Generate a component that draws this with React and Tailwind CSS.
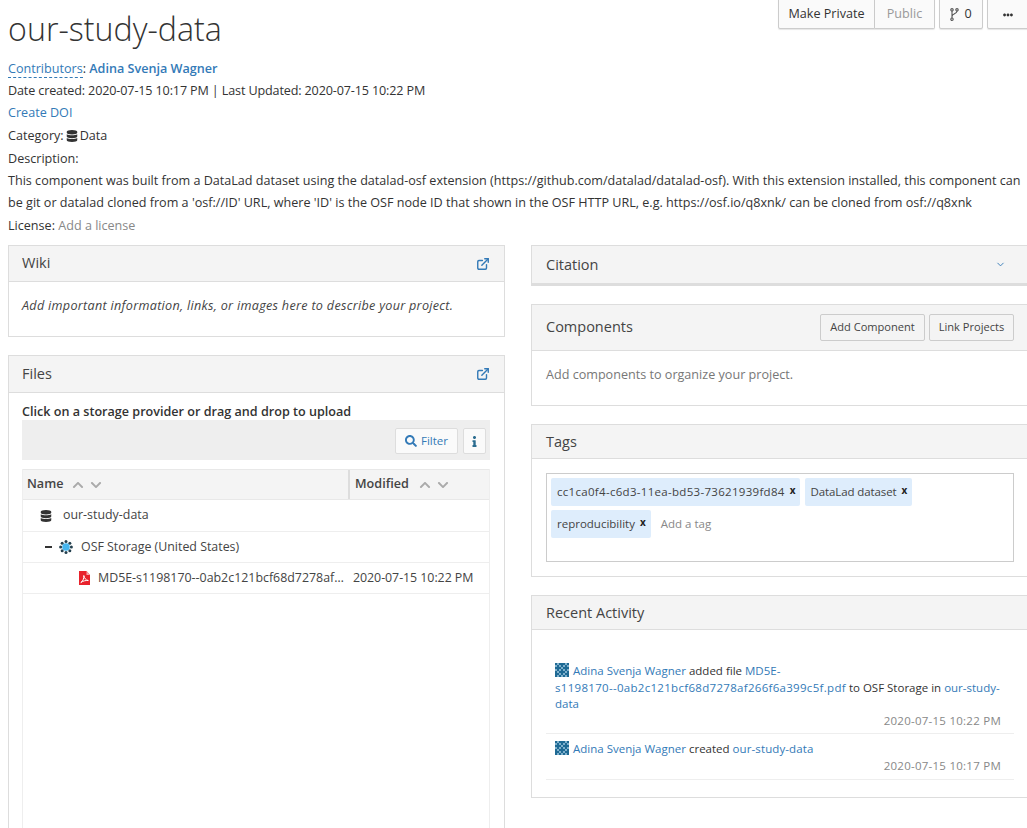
import { ChevronDown, ExternalLink } from 'lucide-react'
import { FaChevronDown, FaChevronUp, FaDatabase, FaEllipsisH, FaInfo, FaSearch } from 'react-icons/fa'

const link = 'text-[#337ab7]'
const topBtn = 'flex items-center justify-center h-[34px] pt-[5px] border border-[#ccc] bg-[#fafafa] shadow-[0_1px_1px_rgba(0,0,0,0.1)]'

function OsfLogo() {
  const dots = [0, 45, 90, 135, 180, 225, 270, 315]
  return (
    <svg width="14" height="14" viewBox="0 0 14 14">
      {dots.map((a) => (
        <circle
          key={a}
          cx={7 + 5.4 * Math.cos((a * Math.PI) / 180)}
          cy={7 + 5.4 * Math.sin((a * Math.PI) / 180)}
          r="1.5"
          fill="#24404f"
        />
      ))}
      <circle cx="7" cy="7" r="3.8" fill="#45b5ee" />
    </svg>
  )
}

function ForkIcon() {
  return (
    <svg width="9" height="13" viewBox="0 0 9 13" fill="none" stroke="#555" strokeWidth="1.1">
      <circle cx="2" cy="1.8" r="1.2" />
      <circle cx="2" cy="11.200" r="1.2" />
      <circle cx="7" cy="1.8" r="1.2" />
      <path d="M2 3v7M7 3c0 3-5 2.500-5 5.500" />
    </svg>
  )
}

function PdfIcon() {
  return (
    <svg width="11" height="14" viewBox="0 0 11 14" className="shrink-0">
      <path d="M0 0h7.500l3.500 4v10H0z" fill="#e8222c" />
      <path d="M7.500 0l3.500 4H7.500z" fill="#f7a8ac" />
      <path d="M1.800 11.500c2-1 3.300-4 3-7 .8 3 1.800 4.500 4.500 5-2.500-.2-5 .3-7.500 2z" fill="none" stroke="#fff" strokeWidth="1" />
    </svg>
  )
}

// identicon used next to the activity log entries
function Identicon() {
  const rows = ['1011101', '0101010', '1110111', '0101010', '1011101', '1101011', '1010101']
  return (
    <svg width="14" height="14" viewBox="0 0 14 14" className="inline-block align-[-2px] mr-[4px]">
      <rect width="14" height="14" fill="#7fb0cc" />
      {rows.map((r, y) =>
        r.split('').map((c, x) =>
          c === '1' ? <rect key={x + '-' + y} x={x * 2} y={y * 2} width="2" height="2" fill="#1f6a94" /> : null
        )
      )}
    </svg>
  )
}

function Panel({ title, right, headClass = 'h-[37px]', pad = 'pl-[13px]', lift = '', className = '', children }) {
  return (
    <div className={`border border-[#ddd] bg-white ${className}`}>
      <div className={`flex items-center justify-between bg-[#f4f4f4] border-b border-[#ddd] pr-[14px] ${pad} ${headClass}`}>
        <h3 className={`text-[14.5px] text-[#444] ${lift}`}>{title}</h3>
        {right}
      </div>
      {children}
    </div>
  )
}

function Sort() {
  return (
    <span className="flex items-center gap-[6px] text-[#aaa]">
      <FaChevronUp size={12} />
      <FaChevronDown size={12} />
    </span>
  )
}

function Tag({ text = '', left = 'pl-[6px]', children }) {
  return (
    <span className={`flex items-center h-[28px] bg-[#deedfc] rounded-[2px] pr-[5px] mb-[4px] mr-[5px] text-[11.5px] text-[#444] ${left}`}>
      <span className={text}>{children}</span>
      <span className="ml-[5px] -mt-[3px] text-[10px] font-bold text-[#222]">x</span>
    </span>
  )
}

export default function App() {
  return (
    <div className="w-[1027px] h-[828px] overflow-hidden bg-white text-[12.6px] text-[#333] font-['Open_Sans',sans-serif] pl-[8px]">
      {/* Project header */}
      <div className="w-[1019px] flex items-start justify-between">
        <h2 className="text-[32.2px] font-light leading-[36px] mt-[11px] text-[#333]">our-study-data</h2>
        <div className="flex -mt-[5px] -mr-[10px] text-[#333]">
          <div className="flex h-[34px]">
            <span className={`${topBtn} w-[97px] rounded-l-[2px]`}>Make Private</span>
            <span className={`${topBtn} w-[60px] border-l-0 rounded-r-[2px] text-[#999]`}>Public</span>
          </div>
          <span className={`${topBtn} gap-[5px] w-[44px] ml-[4px] rounded-[2px]`}>
            <ForkIcon /> 0
          </span>
          <span className={`${topBtn} w-[50px] pr-[8px] ml-[4px] rounded-[2px]`}>
            <FaEllipsisH size={10} />
          </span>
        </div>
      </div>

      <div className="mt-[10px] leading-[22.5px]">
        <p className="h-[22.5px] pt-[1px]">
          <span className={`${link} border-b border-dashed border-[#337ab7]`}>Contributors</span>:{' '}
          <span className={`${link} font-semibold`}>Adina Svenja Wagner</span>
        </p>
        <p className="tracking-[-0.14px]">Date created: 2020-07-15 10:17 PM | Last Updated: 2020-07-15 10:22 PM</p>
        <p className={link}>Create DOI</p>
        <p className="flex items-center">
          Category:
          <FaDatabase size={12} className="mx-[2px] text-[#333]" />
          Data
        </p>
        <p className="h-[22.5px] pt-[1px]">Description:</p>
        <p className="w-[1019px]">
          This component was built from a DataLad dataset using the datalad-osf extension (https://github.com/datalad/datalad-osf). With this extension installed, this component can be git or datalad cloned from a 'osf://ID' URL, where 'ID' is the OSF node ID that shown in the OSF HTTP URL, e.g. https://osf.io/q8xnk/ can be cloned from osf://q8xnk
        </p>
        <p>
          License: <span className="text-[#888]">Add a license</span>
        </p>
      </div>

      <div className="flex gap-[26px] mt-[8px] w-[1021px]">
        {/* Left column */}
        <div className="w-[497px] shrink-0 flex flex-col gap-[18px]">
          <Panel title="Wiki" headClass="h-[36px]" lift="-mt-[2px]" right={<ExternalLink size={14} strokeWidth={2.4} className={link} />}>
            <p className="h-[54px] px-[13px] pt-[15px] italic text-[#444] tracking-[0.3px]">Add important information, links, or images here to describe your project.</p>
          </Panel>

          <Panel title="Files" lift="-mt-[1px]" right={<ExternalLink size={14} strokeWidth={2.4} className={link} />} className="h-[600px]">
            <div className="pl-[13px] pr-[14px] pt-[10px]">
              <p className="font-semibold text-[#333] leading-[17px]">Click on a storage provider or drag and drop to upload</p>
              <div className="flex justify-end items-center gap-[5px] h-[40px] bg-[#eee] pr-[4px] pt-[2px]">
                <span className={`flex items-center justify-center gap-[4px] h-[26px] w-[63px] bg-[#fafafa] border border-[#ddd] rounded-[2px] text-[11.5px] ${link}`}>
                  <FaSearch size={12} /> Filter
                </span>
                <span className="flex items-center justify-center h-[26px] w-[23px] bg-[#fafafa] border border-[#ddd] rounded-[2px] text-[#2b6c8f]">
                  <FaInfo size={11} />
                </span>
              </div>
              <div className="mt-[9px] border-x border-[#eee] h-[370px] text-[12.4px]">
                <div className="flex h-[31px] bg-[#f4f4f4] border-y border-[#e8e8e8] font-semibold text-[#444] text-[12.6px]">
                  <div className="w-[327px] flex items-center gap-[9px] pl-[4px] border-r-2 border-[#ddd]">
                    Name <Sort />
                  </div>
                  <div className="flex items-center gap-[10px] pl-[5px]">
                    Modified <Sort />
                  </div>
                </div>
                <div className="flex items-center h-[32px] border-b border-[#eee] pl-[17px]">
                  <FaDatabase size={12} className="text-[#333]" />
                  <span className="ml-[11px] text-[#444]">our-study-data</span>
                </div>
                <div className="flex items-center h-[31px] border-b border-[#eee] pl-[22px]">
                  <span className="w-[7px] h-[2px] bg-[#333] mr-[7px]" />
                  <OsfLogo />
                  <span className="ml-[8px] text-[#444]">OSF Storage (United States)</span>
                </div>
                <div className="flex items-center h-[31px] border-b border-[#eee] pl-[56px]">
                  <PdfIcon />
                  <span className="ml-[8px] w-[248px] truncate text-[#444]">MD5E-s1198170--0ab2c121bcf68d7278af266f6a399c5f.pdf</span>
                  <span className="ml-[7px] whitespace-nowrap text-[#444] tracking-[-0.05px]">2020-07-15 10:22 PM</span>
                </div>
              </div>
            </div>
          </Panel>
        </div>

        {/* Right column */}
        <div className="w-[498px] shrink-0 flex flex-col gap-[18px]">
          <Panel
            title="Citation"
            pad="pl-[14px]"
            headClass="h-[39px] border-b-2"
            right={<ChevronDown size={11} className={`${link} mr-[8px]`} />}
          />

          <Panel
            title="Components"
            pad="pl-[14px]"
            lift="-mt-[1px]"
            headClass="h-[46px]"
            right={
              <div className="flex gap-[4px] text-[11.1px] text-[#444]">
                <span className="flex items-center justify-center h-[27px] w-[105px] border border-[#ccc] rounded-[2px]">Add Component</span>
                <span className="flex items-center justify-center h-[27px] w-[85px] border border-[#ccc] rounded-[2px]">Link Projects</span>
              </div>
            }
          >
            <p className="h-[54px] px-[14px] pt-[15px] text-[#777]">Add components to organize your project.</p>
          </Panel>

          <Panel title="Tags" pad="pl-[14px]" headClass="h-[34px]">
            <div className="p-[14px]">
              <div className="h-[89px] border border-[#ccc] pl-[4px] pt-[4px] flex flex-wrap content-start">
                <Tag text="tracking-[0.3px]">cc1ca0f4-c6d3-11ea-bd53-73621939fd84</Tag>
                <Tag left="pl-[5px]" text="tracking-[-0.1px]">DataLad dataset</Tag>
                <Tag>reproducibility</Tag>
                <span className="h-[28px] flex items-center ml-[5px] text-[11.5px] text-[#888]">Add a tag</span>
              </div>
            </div>
          </Panel>

          <Panel title="Recent Activity" pad="pl-[14px]" headClass="h-[34px]">
            <div className="px-[14px] pt-[33px] pb-[17px] text-[11.5px] leading-[16.5px]">
              <div className="border-b border-[#eee] pl-[9px] pr-[13px] pb-[4px]">
                <p>
                  <Identicon />
                  <span className={link}>Adina Svenja Wagner</span> added file{' '}
                  <span className={link}>
                    MD5E-
                    <br />
                    <span className="tracking-[0.3px]">s1198170--0ab2c121bcf68d7278af266f6a399c5f.pdf</span>
                  </span>{' '}
                  to OSF Storage in <span className={link}>our-study-<br />data</span>
                </p>
                <p className="text-right text-[#888] tracking-[0.25px]">2020-07-15 10:22 PM</p>
              </div>
              <div className="border-b border-[#eee] pl-[9px] pr-[13px] pt-[7px] pb-[5px]">
                <p>
                  <Identicon />
                  <span className={link}>Adina Svenja Wagner</span> created{' '}
                  <span className={`${link} tracking-[0.1px]`}>our-study-data</span>
                </p>
                <p className="text-right text-[#888] tracking-[0.25px]">2020-07-15 10:17 PM</p>
              </div>
            </div>
          </Panel>
        </div>
      </div>
    </div>
  )
}
